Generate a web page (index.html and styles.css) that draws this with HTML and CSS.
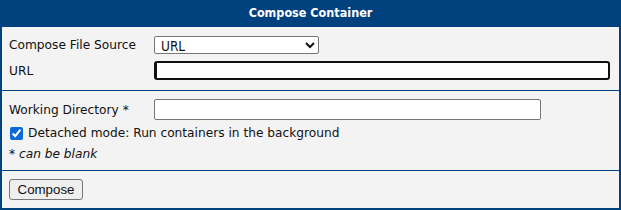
FILE: index.html
```html
<!DOCTYPE html>
<html lang="en">
  <head>
    <meta charset="UTF-8" />
    <title>Compose Container</title>
    <link rel="stylesheet" href="styles.css">
  </head>
  <body>
    <form class="panel">
      <div class="panel-header">Compose Container</div>

      <div class="section section-source">
        <div class="field-grid">
          <label for="source">Compose File Source</label>
          <select id="source" class="select">
            <option>URL</option>
            <option>File</option>
          </select>

          <label for="url">URL</label>
          <input id="url" class="input input-focus" type="text" />
        </div>
      </div>

      <div class="section section-options">
        <div class="field-grid">
          <label for="workdir">Working Directory *</label>
          <input id="workdir" class="input input-short" type="text" />
        </div>
        <label class="check">
          <input type="checkbox" checked />
          <span>Detached mode: Run containers in the background</span>
        </label>
        <div class="note">* can be blank</div>
      </div>

      <div class="section section-actions">
        <button type="button" class="btn">Compose</button>
      </div>
    </form>
  </body>
</html>
```

FILE: styles.css
```css
body {
  margin: 0;
  font-family: "DejaVu Sans", sans-serif;
  font-size: 12.2px;
  color: #111;
  background: #fff;
}

.panel {
  width: 621px;
  height: 210px;
  box-sizing: border-box;
  border: 2px solid #00417e;
  border-top: 0;
  background: #f3f3f3;
  display: flex;
  flex-direction: column;
}

.panel-header {
  background: #00417e;
  color: #fff;
  font-family: "DejaVu Sans Condensed", "DejaVu Sans", sans-serif;
  font-weight: bold;
  text-align: center;
  height: 27px;
  line-height: 26px;
  font-size: 12.5px;
}

.section {
  padding: 0 7px;
}

.section + .section {
  border-top: 1px solid #00417e;
}

.section-source {
  padding-top: 9px;
  padding-bottom: 9px;
  height: 63px;
  box-sizing: border-box;
}

.section-options {
  padding-top: 8px;
  height: 80px;
  box-sizing: border-box;
}

.section-actions {
  padding-top: 8px;
}

.field-grid {
  display: grid;
  grid-template-columns: 145px 1fr;
  grid-auto-rows: min-content;
  align-items: center;
  row-gap: 7px;

  label {
    white-space: nowrap;
  }
}

.select {
  width: 165px;
  height: 18px;
  box-sizing: border-box;
  font-family: "DejaVu Sans Condensed", "DejaVu Sans", sans-serif;
  font-size: 13.5px;
  padding: 0 2px;
  border: 1px solid #767676;
  border-radius: 2px;
  background: #fff;
  color: #111;
}

.input {
  height: 19px;
  box-sizing: border-box;
  border: 1px solid #767676;
  border-radius: 2px;
  background: #fff;
  padding: 0 2px;
  font: inherit;
}

.input-focus {
  width: 456px;
  border: 2px solid #101010;
  border-radius: 3px;
  border-left-width: 3px;
}

.input-short {
  width: 387px;
  height: 21px;
}

.check {
  display: flex;
  align-items: center;
  gap: 5px;
  margin-top: 6px;

  input {
    margin: 0 0 0 1px;
    width: 13px;
    height: 13px;
    accent-color: #0b69d8;
  }
}

.note {
  font-style: italic;
  margin-top: 7px;
}

.btn {
  font-family: "Liberation Sans", sans-serif;
  font-size: 13.3px;
  height: 21px;
  width: 74px;
  padding: 0;
  background: #efefef;
  border: 1px solid #767676;
  border-radius: 3px;
  color: #111;
}
```
